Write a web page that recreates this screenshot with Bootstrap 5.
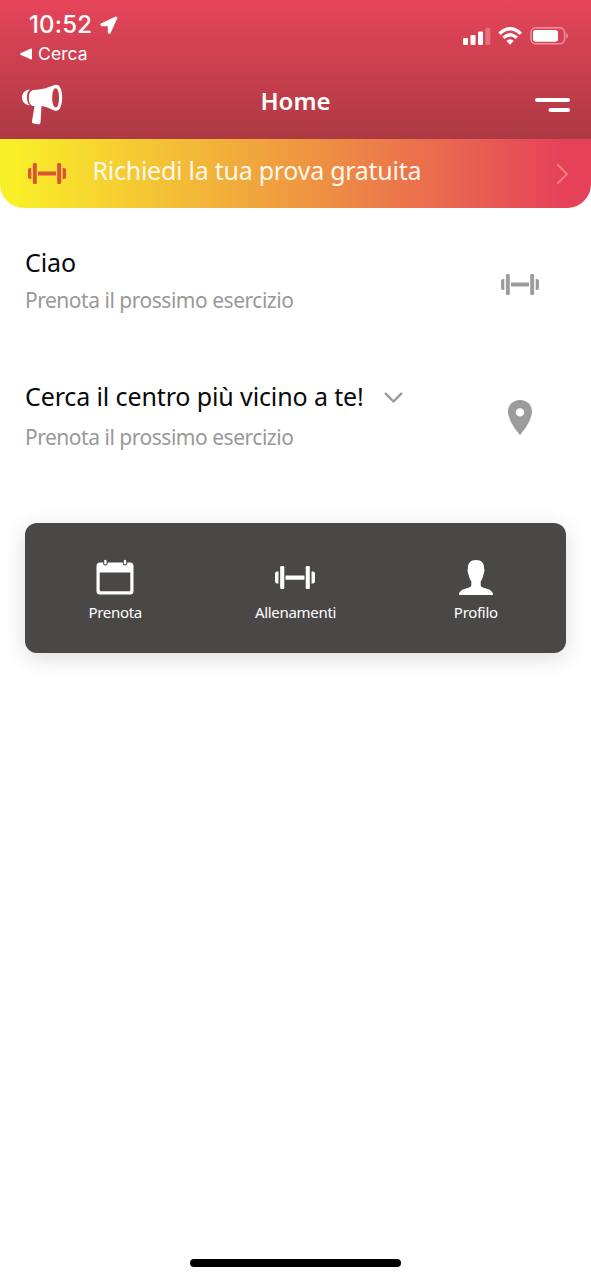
<!DOCTYPE html>
<html lang="it">
<head>
<meta charset="utf-8">
<meta name="viewport" content="width=device-width, initial-scale=1">
<title>Home</title>
<link href="https://cdn.jsdelivr.net/npm/bootstrap@5.3.0/dist/css/bootstrap.min.css" rel="stylesheet">
<style>
body{font-family:"Noto Sans","Open Sans",sans-serif;background:#fff;min-height:1280px;line-height:1}
svg{display:block;flex:none}
.app-head{height:139px;background:linear-gradient(#e6455a,#ac3943)}
.status{font-family:Inter,"Liberation Sans",sans-serif;height:70px;padding:12px 22px 0 20px}
.clock{font-size:24px;line-height:26px;font-weight:500;letter-spacing:.15px;padding-left:9px}
.back{font-size:17.5px;line-height:20px;margin-top:6px;letter-spacing:.1px}
.back span{margin-left:6px}
.signals{padding-top:15px}
.bar-title{height:69px;padding:0 21px 0 21px}
.bar-title h1{font-size:24px;font-weight:600;line-height:30px;letter-spacing:0;margin-top:-8px}
.side{width:60px}
.promo{height:69px;border-radius:0 0 24px 24px;background:linear-gradient(90deg,#f9ef28 0,#f9ef28 2%,#f0a23e 45%,#e5425a 95%);color:#fff8ea;padding:0 22px 0 28px}
.promo-text{font-size:25px;font-weight:400;line-height:34px;letter-spacing:-.26px;margin:-7px 0 0 26.5px}
.ico-red{color:#dd5138}
.info{padding:0 52.5px 0 25px}
.info h2{font-size:25px;font-weight:400;line-height:32px;letter-spacing:-.12px;color:#080808}
.info p{font-size:21px;font-weight:400;line-height:28px;letter-spacing:-.48px;color:#999}
.info-first{padding-top:38px}
.info-center{padding-top:66px}
.info-center h2{margin-bottom:11px}
.grey{color:#9c9c9c}
.menu{height:130px;margin:72px 25px 0;border-radius:12px;background:#494846;box-shadow:0 5px 22px rgba(0,0,0,.14)}
.menu a{color:#fff;font-size:15px;line-height:20px;letter-spacing:-.3px;padding-top:36px}
.menu .pic{height:36px;margin-bottom:7px}
.home-bar{width:211px;height:8px;border-radius:4px;background:#000;margin-bottom:13px}
</style>
</head>
<body class="d-flex flex-column">
<svg width="0" height="0" class="position-absolute" aria-hidden="true">
<symbol id="dumbbell" viewBox="0 0 38 21" preserveAspectRatio="none"><g fill="currentColor"><path d="M3.3 5v11H2Q0 16 0 14V7Q0 5 2 5zM34.7 5v11H36q2 0 2-2V7q0-2-2-2z"/><rect x="4.9" width="3.9" height="21" rx="1.2"/><rect x="29.2" width="3.9" height="21" rx="1.2"/><rect x="10" y="8.6" width="18" height="3.9" rx=".5"/></g></symbol>
</svg>
<header class="app-head text-white">
<div class="status d-flex justify-content-between">
<div>
<div class="clock d-flex align-items-center"><span>10:52</span><svg class="ms-2" width="18" height="19" viewBox="0 0 18 19"><path d="M15.8 2 2 8.7H9.3V16.3Z" fill="#fff" stroke="#fff" stroke-width="3" stroke-linejoin="round"/></svg></div>
<div class="back d-flex align-items-center"><svg width="12" height="12" viewBox="0 0 12 12"><path d="M.5 5.3Q-.3 6 .5 6.7L11 11.5q1 .2 1-.8V1.3q0-1-1-.8z" fill="#fff"/></svg><span>Cerca</span></div>
</div>
<div class="signals d-flex">
<svg width="106" height="18" viewBox="0 0 106 18" fill="#fff"><rect x="0" y="11" width="5" height="7" rx="1.3"/><rect x="7.5" y="8" width="5" height="10" rx="1.3"/><rect x="15" y="4.5" width="5" height="13.5" rx="1.3"/><rect x="22.3" y="1" width="5" height="17" rx="1.3" opacity=".25"/><g fill="none" stroke="#fff" stroke-width="3.4"><path d="M36.5 6.7Q47-3.1 57.8 6.7"/><path d="M40.4 10.8q6.7-6 13.4 0"/></g><path d="M43.4 13.7q3.7-3 7.4 0L47.1 17.8z"/><rect x="68" y=".8" width="33.6" height="16" rx="4.8" fill="none" stroke="#fff" stroke-opacity=".45" stroke-width="1.5"/><rect x="70" y="3" width="25" height="11.7" rx="2.7"/><path d="M103.4 6q3.2 2.8 0 5.8z" opacity=".5"/></svg>
</div>
</div>
<div class="bar-title d-flex align-items-center justify-content-between">
<div class="side"><svg width="42" height="41" viewBox="0 0 42 41"><g fill="#fff"><path fill-rule="evenodd" d="M34.5.8C39 0 41.2 6.5 41.2 13.5S39 27.5 34.5 26.8C31 26.5 27.5 22.7 20.5 22L19.5 38.5Q19.3 40.7 17 40.3L12.6 39.6Q10.7 39.3 11 37.2L13.5 22H11.5Q7.8 20.5 7.8 13.8T12 6C23.5 6 28.5 2.2 34.5.8ZM34.7 4.2C32.5 4.4 31.2 8.5 31.2 13.8S32.5 23.2 34.7 23.4 38 19 38 13.7 36.9 4 34.7 4.2Z"/><path d="M8.6 5.5C5 9.5 5 17 8.6 21.2 4 20.8 1 17.5 1 13.4S4 6 8.6 5.5Z"/></g></svg></div>
<h1 class="mb-0">Home</h1>
<div class="side d-flex justify-content-end"><svg width="35" height="15" viewBox="0 0 35 15" fill="#fff"><rect x="0" y="1" width="35" height="4" rx="2"/><rect x="13.5" y="11" width="21.5" height="4" rx="2"/></svg></div>
</div>
</header>
<a class="promo d-flex align-items-center text-decoration-none" href="#">
<svg class="ico-red" width="38" height="21"><use href="#dumbbell"/></svg>
<span class="promo-text flex-grow-1"><span>Richiedi la tua prova gratuita</span></span>
<svg width="13" height="22" viewBox="0 0 13 22" fill="none" stroke="#ee7b74" stroke-width="2.3" stroke-linecap="round" stroke-linejoin="round"><path d="m2 2 9 9-9 9"/></svg>
</a>
<main>
<section class="info info-first d-flex justify-content-between">
<div><h2 class="mb-2">Ciao</h2><p class="mb-0">Prenota il prossimo esercizio</p></div>
<svg class="grey" style="margin-top:28px" width="38" height="21"><use href="#dumbbell"/></svg>
</section>
<section class="info info-center d-flex justify-content-between">
<div><h2 class="d-flex align-items-center"><span>Cerca il centro più vicino a te!</span><svg style="margin:4px 0 0 20px" width="19" height="12" viewBox="0 0 19 12" fill="none" stroke="#999" stroke-width="2.4" stroke-linecap="round" stroke-linejoin="round"><path d="m1.7 1.7 7.8 7.8 7.8-7.8"/></svg></h2><p class="mb-0">Prenota il prossimo esercizio</p></div>
<svg class="grey" style="margin:19.5px 7px 0 0" width="24" height="35" viewBox="0 0 24 35"><path fill="currentColor" fill-rule="evenodd" d="M12 0C5 0 0 5 0 11.7 0 18 5.8 28 12 35 18.2 28 24 18 24 11.7 24 5 19 0 12 0Zm0 8.2a4.2 4.2 0 1 1 0 8.4 4.2 4.2 0 0 1 0-8.4z"/></svg>
</section>
<nav class="menu row g-0 text-center">
<a class="col-4 text-decoration-none" href="#"><span class="pic d-flex align-items-center justify-content-center"><svg width="38" height="36" viewBox="0 0 38 36"><path fill="#fff" fill-rule="evenodd" d="M4 3.5H34Q37.5 3.5 37.5 7V32Q37.5 35.5 34 35.5H4Q.5 35.5 .5 32V7Q.5 3.5 4 3.5ZM3.7 13.5V31Q3.7 32.3 5 32.3H33Q34.3 32.3 34.3 31V13.5Z"/><g fill="#494846"><rect x="7.2" y="0" width="4.4" height="6.5" rx="2"/><rect x="26.8" y="0" width="4.4" height="6.5" rx="2"/></g><g fill="#fff"><rect x="8.2" y=".8" width="2.4" height="4.6" rx="1.2"/><rect x="27.8" y=".8" width="2.4" height="4.6" rx="1.2"/></g></svg></span><span>Prenota</span></a>
<a class="col-4 text-decoration-none" href="#"><span class="pic d-flex align-items-center justify-content-center"><svg width="40" height="23"><use href="#dumbbell"/></svg></span><span>Allenamenti</span></a>
<a class="col-4 text-decoration-none" href="#"><span class="pic d-flex align-items-center justify-content-center"><svg width="34" height="35" viewBox="0 0 34 35"><path fill="#fff" d="M17 0C22.5 0 25.3 3 25.1 8.5 25.7 9.5 25.5 12.5 24.5 14.5 24 17.5 23 19.3 21.7 21.5V25.5Q22 27.3 25 28C30.5 29 34 31 34 35H0C0 31 3.5 29 9 28Q12 27.3 12.3 25.5V21.5C11 19.3 10 17.5 9.5 14.5 8.5 12.5 8.3 9.5 8.9 8.5 8.7 3 11.5 0 17 0Z"/></svg></span><span>Profilo</span></a>
</nav>
</main>
<div class="home-bar mx-auto mt-auto"></div>
</body>
</html>
